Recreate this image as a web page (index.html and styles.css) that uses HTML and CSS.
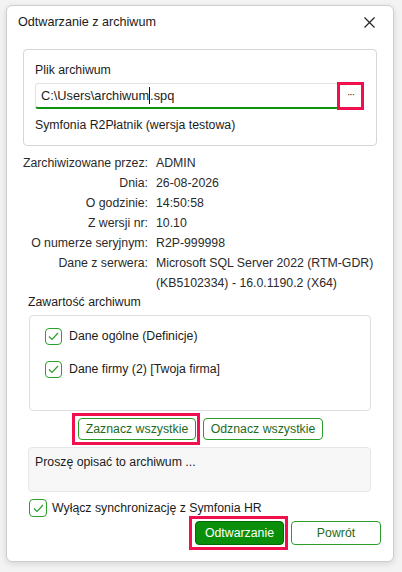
FILE: index.html
```html
<!DOCTYPE html>
<html lang="pl">
<head>
<meta charset="utf-8">
<title>Odtwarzanie z archiwum</title>
<link rel="stylesheet" href="styles.css">
</head>
<body>
<div class="window">
  <div class="titlebar">
    <span class="title">Odtwarzanie z archiwum</span>
    <svg class="close" width="11" height="11" viewBox="0 0 11 11"><path d="M0.5 0.5 L10.5 10.5 M10.5 0.5 L0.5 10.5" stroke="#222" stroke-width="1.2" fill="none"/></svg>
  </div>

  <div class="filebox">
    <div class="label">Plik archiwum</div>
    <div class="filerow">
      <div class="input"><span>C:\Users\archiwum</span><span class="caret"></span><span>.spq</span></div>
      <div class="browse">···</div>
    </div>
    <div class="status">Symfonia R2Płatnik (wersja testowa)</div>
  </div>

  <div class="info">
    <span class="k">Zarchiwizowane przez:</span><span class="v">ADMIN</span>
    <span class="k">Dnia:</span><span class="v">26-08-2026</span>
    <span class="k">O godzinie:</span><span class="v">14:50:58</span>
    <span class="k">Z wersji nr:</span><span class="v">10.10</span>
    <span class="k">O numerze seryjnym:</span><span class="v">R2P-999998</span>
    <span class="k">Dane z serwera:</span><span class="v">Microsoft SQL Server 2022 (RTM-GDR) (KB5102334) - 16.0.1190.2 (X64)</span>
  </div>

  <div class="section">Zawartość archiwum</div>
  <div class="contents">
    <label class="check"><span class="box"><svg width="11" height="9" viewBox="0 0 11 9"><path d="M1 4.5 L4 7.5 L10 1" stroke="#2a9d2a" stroke-width="1.2" fill="none"/></svg></span>Dane ogólne (Definicje)</label>
    <label class="check"><span class="box"><svg width="11" height="9" viewBox="0 0 11 9"><path d="M1 4.5 L4 7.5 L10 1" stroke="#2a9d2a" stroke-width="1.2" fill="none"/></svg></span>Dane firmy (2) [Twoja firma]</label>
  </div>

  <div class="selrow">
    <button class="btn outline mark">Zaznacz wszystkie</button>
    <button class="btn outline">Odznacz wszystkie</button>
  </div>

  <div class="desc">Proszę opisać to archiwum ...</div>

  <label class="check sync"><span class="box"><svg width="11" height="9" viewBox="0 0 11 9"><path d="M1 4.5 L4 7.5 L10 1" stroke="#2a9d2a" stroke-width="1.2" fill="none"/></svg></span>Wyłącz synchronizację z Symfonia HR</label>

  <div class="actions">
    <button class="btn primary mark">Odtwarzanie</button>
    <button class="btn outline wide">Powrót</button>
  </div>
</div>
</body>
</html>
```

FILE: styles.css
```css
html, body {
  margin: 0;
  padding: 0;
}
body {
  background: #f3f3f3;
  font-family: "Liberation Sans", Arial, sans-serif;
  font-size: 12.3px;
  color: #1c1c1c;
  width: 402px;
  height: 572px;
  overflow: hidden;
}
.window {
  box-sizing: border-box;
  margin: 5px 0 0 6px;
  width: 388px;
  height: 557px;
  background: #fff;
  border: 1px solid #cdcdcd;
  border-radius: 6px;
  box-shadow: 0 2px 6px rgba(0, 0, 0, 0.12);
}
.titlebar {
  height: 31px;
  display: flex;
  align-items: center;
  justify-content: space-between;
  padding: 0 18px 0 11px;
}
.title {
  font-size: 12.6px;
  color: #1a1a1a;
}
.close {
  display: block;
  margin-top: 1px;
}
.filebox {
  box-sizing: border-box;
  margin: 12px 0 0 16px;
  width: 354px;
  height: 97px;
  border: 1px solid #d6d6d6;
  border-radius: 4px;
  padding: 12px 0 0 11px;
}
.label {
  line-height: 16px;
}
.filerow {
  display: flex;
  align-items: center;
  margin-top: 4px;
  height: 28px;
}
.input {
  box-sizing: border-box;
  width: 302px;
  height: 26px;
  border: 1px solid #e2e2e2;
  border-bottom: 2px solid #0f930f;
  border-right: none;
  border-radius: 3px 0 0 3px;
  padding: 0 0 0 5px;
  display: flex;
  align-items: center;
  font-size: 12.8px;
}
.caret {
  display: inline-block;
  width: 1px;
  height: 17px;
  background: #111;
}
.browse {
  box-sizing: border-box;
  width: 27px;
  height: 28px;
  border: 3px solid #f0104e;
  display: flex;
  align-items: center;
  justify-content: center;
  font-size: 10px;
  letter-spacing: -1px;
  color: #222;
  padding-bottom: 3px;
}
.status {
  margin-top: 7px;
  line-height: 16px;
}
.info {
  display: grid;
  grid-template-columns: 141px 230px;
  column-gap: 8px;
  margin-top: 7px;
  line-height: 20px;
  color: #2a2a2a;
}
.info .k {
  text-align: right;
}
.section {
  margin: 1px 0 0 21px;
  line-height: 16px;
}
.contents {
  box-sizing: border-box;
  margin: 5px 0 0 22px;
  width: 342px;
  height: 96px;
  border: 1px solid #dedede;
  border-radius: 4px;
  padding: 12px 0 0 15px;
  display: flex;
  flex-direction: column;
  gap: 16px;
}
.check {
  display: flex;
  align-items: center;
  gap: 7px;
  line-height: 17px;
}
.box {
  box-sizing: border-box;
  width: 17px;
  height: 17px;
  border: 1.3px solid #2aa02a;
  border-radius: 4px;
  display: flex;
  align-items: center;
  justify-content: center;
}
.selrow {
  display: flex;
  justify-content: center;
  gap: 7px;
  margin-top: 7px;
  padding-left: 1px;
}
.btn {
  box-sizing: border-box;
  font-family: "Liberation Sans", Arial, sans-serif;
  font-size: 12.3px;
  height: 22px;
  padding: 0;
  border-radius: 4px;
  cursor: pointer;
}
.btn.outline {
  background: #fff;
  border: 1px solid #2a9d2a;
  color: #1d6b1d;
}
.selrow .btn:first-child {
  width: 118px;
}
.selrow .btn:last-child {
  width: 120px;
}
.btn.mark {
  position: relative;
}
.btn.mark::after {
  content: "";
  position: absolute;
  top: -6px;
  bottom: -6px;
  left: -7px;
  right: -5px;
  border: 3px solid #f0104e;
  pointer-events: none;
}
.desc {
  box-sizing: border-box;
  margin: 7px 0 0 21px;
  width: 343px;
  height: 45px;
  background: #f7f7f7;
  border: 1px solid #e6e6e6;
  border-radius: 4px;
  padding: 6px 6px;
  line-height: 16px;
}
.sync {
  margin: 7px 0 0 22px;
  gap: 5px;
}
.sync .box {
  width: 18px;
  height: 18px;
}
.actions {
  display: flex;
  justify-content: flex-end;
  gap: 7px;
  margin-top: 4px;
  padding-right: 12px;
}
.actions .btn {
  height: 24px;
  width: 89px;
}
.actions .btn.wide {
  width: 90px;
}
.btn.primary {
  background: #0a8f0a;
  border: 1px solid #066a06;
  color: #fff;
}
```
